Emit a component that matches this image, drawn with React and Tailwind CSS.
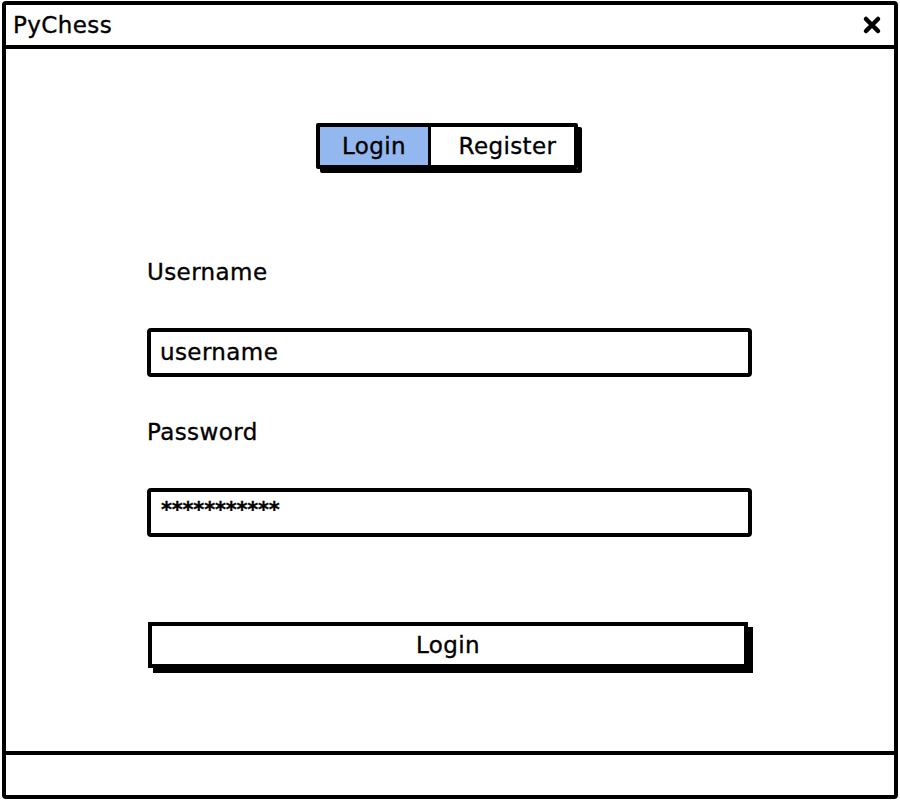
export default function App() {
  const font = { fontFamily: '"DejaVu Sans", "Liberation Sans", sans-serif' };

  return (
    <div
      className="w-[900px] h-[800px] bg-white text-black overflow-hidden tracking-[0.4px] [-webkit-text-stroke:0.35px_black]"
      style={font}
    >
      {/* WINDOW */}
      <div className="ml-[2px] mt-[1px] w-[896px] h-[798px] border-4 border-black rounded-[4px] flex flex-col">
        {/* TITLE BAR */}
        <div className="h-[44px] shrink-0 border-b-4 border-black flex items-center justify-between pl-[7px] pr-[12px]">
          <span className="text-[23px] leading-none">PyChess</span>
          <svg width="20" height="20" viewBox="0 0 20 20">
            <path d="M4 4 L16 16 M16 4 L4 16" stroke="black" strokeWidth="4.5" strokeLinecap="round" />
          </svg>
        </div>

        {/* CONTENT */}
        <div className="flex-1 flex flex-col pl-[141px] pt-[74px]">
          {/* TABS */}
          <div className="ml-[169px] flex h-[46px] w-[262px] border-4 border-black shadow-[4px_4px_0_#000] rounded-[2px]">
            <div className="w-[111px] bg-[#92b8ef] border-r-[3px] border-black flex items-center justify-center text-[23px] leading-none">
              Login
            </div>
            <div className="flex-1 flex items-center justify-center text-[23px] leading-none pl-[10px]">
              Register
            </div>
          </div>

          {/* USERNAME */}
          <label className="mt-[92px] text-[23px] leading-none">Username</label>
          <div className="mt-[44px] w-[605px] h-[49px] border-4 border-black rounded-[4px] flex items-center pl-[9px] text-[23px] leading-none">
            username
          </div>

          {/* PASSWORD */}
          <label className="mt-[44px] text-[23px] leading-none">Password</label>
          <div className="mt-[44px] w-[605px] h-[49px] border-4 border-black rounded-[4px] pl-[10px] pt-[8px] text-[21px] font-bold leading-none tracking-[-0.2px]">
            ***********
          </div>

          {/* SUBMIT */}
          <button className="mt-[85px] ml-[1px] w-[600px] h-[46px] border-4 border-black bg-white shadow-[5px_5px_0_#000] flex items-center justify-center text-[23px] leading-none">
            Login
          </button>
        </div>

        {/* STATUS BAR */}
        <div className="h-[44px] shrink-0 border-t-4 border-black"></div>
      </div>
    </div>
  );
}
